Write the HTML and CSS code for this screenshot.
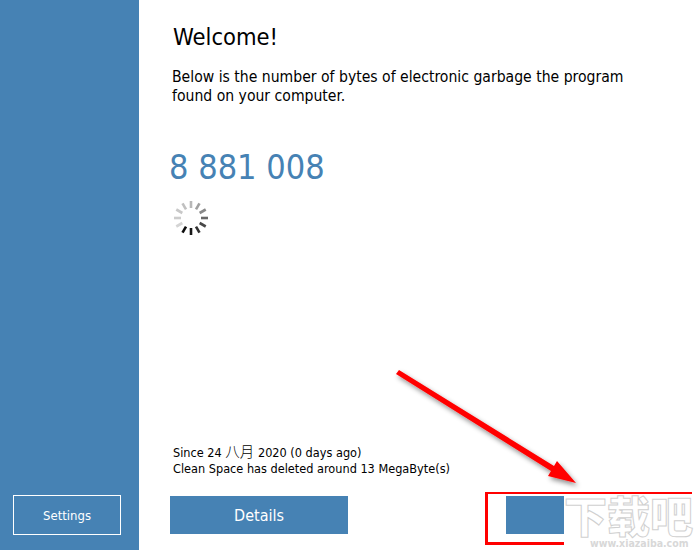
FILE: index.html
```html
<!DOCTYPE html>
<html lang="en">
<head>
<meta charset="utf-8">
<title>Clean Space</title>
<link rel="stylesheet" href="styles.css">
</head>
<body>
<div class="app">
  <aside class="sidebar">
    <button class="settings">Settings</button>
  </aside>
  <main class="content">
    <h1 class="title">Welcome!</h1>
    <p class="intro">Below is the number of bytes of electronic garbage the program<br>found on your computer.</p>
    <div class="count">8 881 008</div>
    <svg class="spinner" width="36" height="36" viewBox="-18 -18 36 36" aria-hidden="true">
      <g stroke-width="2.6" stroke-linecap="butt">
        <line class="s0" x1="0" y1="-10" x2="0" y2="-17"/>
        <line class="s1" x1="0" y1="-10" x2="0" y2="-17" transform="rotate(30)"/>
        <line class="s2" x1="0" y1="-10" x2="0" y2="-17" transform="rotate(60)"/>
        <line class="s3" x1="0" y1="-10" x2="0" y2="-17" transform="rotate(90)"/>
        <line class="s4" x1="0" y1="-10" x2="0" y2="-17" transform="rotate(120)"/>
        <line class="s5" x1="0" y1="-10" x2="0" y2="-17" transform="rotate(150)"/>
        <line class="s6" x1="0" y1="-10" x2="0" y2="-17" transform="rotate(180)"/>
        <line class="s7" x1="0" y1="-10" x2="0" y2="-17" transform="rotate(210)"/>
        <line class="s8" x1="0" y1="-10" x2="0" y2="-17" transform="rotate(240)"/>
        <line class="s9" x1="0" y1="-10" x2="0" y2="-17" transform="rotate(270)"/>
        <line class="s10" x1="0" y1="-10" x2="0" y2="-17" transform="rotate(300)"/>
        <line class="s11" x1="0" y1="-10" x2="0" y2="-17" transform="rotate(330)"/>
      </g>
    </svg>
    <div class="spacer"></div>
    <p class="stats">Since 24 <span class="cjk">八月</span> 2020 (0 days ago)<br>Clean Space has deleted around 13 MegaByte(s)</p>
    <div class="actions">
      <button class="primary details">Details</button>
      <button class="primary clean" aria-label="Clean"></button>
    </div>
  </main>
</div>

<svg class="arrow" width="220" height="150" viewBox="0 0 220 150" aria-hidden="true">
  <defs>
    <filter id="shadow" x="-20%" y="-20%" width="140%" height="140%">
      <feDropShadow dx="2" dy="3" stdDeviation="2.5" flood-color="#000" flood-opacity="0.45"/>
    </filter>
  </defs>
  <path filter="url(#shadow)" fill="#f00" d="M5 6 L8 2 L163 98 L166 93 L185 115 L157 108 L160 103 Z"/>
</svg>
<div class="highlight"></div>
<div class="watermark">
  <span class="wm-cn">下载吧</span>
  <span class="wm-url">www.xiazaiba.com</span>
</div>
</body>
</html>
```
FILE: styles.css
```css
* { box-sizing: border-box; }
html, body { margin: 0; height: 100%; }
body {
  position: relative;
  width: 700px;
  height: 550px;
  overflow: hidden;
  background: #fff;
  color: #000;
  font-family: "DejaVu Sans Condensed", "DejaVu Sans", "Noto Sans CJK SC", sans-serif;
}
.app { display: flex; height: 550px; }
.sidebar {
  width: 139px;
  flex: none;
  background: #4682b4;
  display: flex;
  flex-direction: column;
  justify-content: flex-end;
  padding: 0 18px 15px 13px;
}
.settings {
  width: 108px;
  height: 40px;
  background: transparent;
  border: 1px solid #fff;
  color: #fff;
  font: 13px "DejaVu Sans Condensed", sans-serif;
  padding: 0;
}
.content {
  flex: 1;
  display: flex;
  flex-direction: column;
  padding: 21px 0 16px 31px;
}
.title {
  margin: 0 0 0 3px;
  font-size: 23.5px;
  line-height: 32px;
  font-weight: 400;
}
.intro {
  margin: 15px 0 0 2px;
  font-size: 15.6px;
  line-height: 19px;
  white-space: nowrap;
}
.count {
  margin-top: 39px;
  color: #4682b4;
  font-size: 34px;
  line-height: 44px;
  white-space: nowrap;
  margin-left: -1px;
}
.spinner { display: block; margin: 11px 0 0 3px; flex: none; }
.s0 { stroke: #b8b8b8; }
.s1 { stroke: #a0a0a0; }
.s2 { stroke: #888888; }
.s3 { stroke: #686868; }
.s4 { stroke: #484848; }
.s5 { stroke: #303030; }
.s6 { stroke: #181818; }
.s7 { stroke: #0c0c0c; }
.s8 { stroke: #d4d4d4; }
.s9 { stroke: #cccccc; }
.s10 { stroke: #c8c8c8; }
.s11 { stroke: #c0c0c0; }
.spacer { flex: 1; }
.stats {
  margin: 0 0 19px 3px;
  font-size: 12.6px;
  line-height: 16px;
  white-space: nowrap;
}
.cjk {
  font-family: "Noto Sans CJK SC", sans-serif;
  font-size: 14.5px;
  font-weight: 300;
}
.actions { display: flex; gap: 158px; }
.primary {
  height: 38px;
  background: #4682b4;
  border: 0;
  color: #fff;
  padding: 0;
  font: 16px "DejaVu Sans Condensed", sans-serif;
}
.details { width: 178px; }
.clean { width: 178px; }

/* annotations pasted over the screenshot */
.arrow { position: absolute; left: 391px; top: 368px; }
.highlight {
  position: absolute;
  left: 485px;
  top: 492px;
  width: 207px;
  height: 53px;
  border: solid #f00;
  border-width: 2px 3px 3px 3px;
}
.watermark {
  position: absolute;
  left: 564px;
  top: 494px;
  width: 136px;
  height: 56px;
  background: #fff;
  display: flex;
  flex-direction: column;
  align-items: flex-start;
}
.wm-cn {
  font-family: "Noto Sans CJK SC", sans-serif;
  font-weight: 900;
  font-size: 43px;
  line-height: 42px;
  letter-spacing: 0;
  color: #fff;
  -webkit-text-stroke: 1px #d0d0d0;
  margin-top: -1px;
  white-space: nowrap;
}
.wm-url {
  font: 700 10.5px "DejaVu Sans Condensed", sans-serif;
  color: #d8d8d8;
  margin: 2px 0 0 26px;
  white-space: nowrap;
}
```
